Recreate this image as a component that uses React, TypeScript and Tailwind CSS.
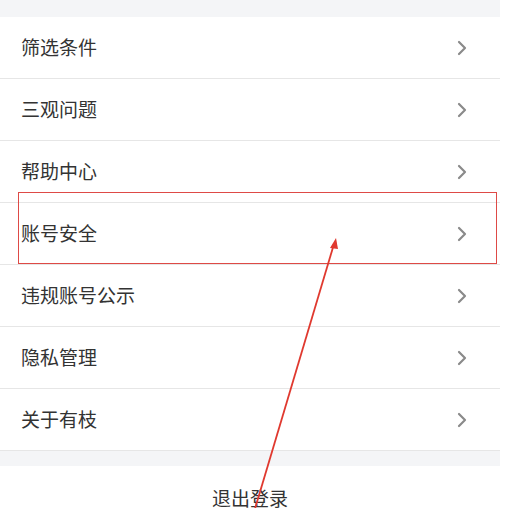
import React from "react";

const items = ["筛选条件", "三观问题", "帮助中心", "账号安全", "违规账号公示", "隐私管理", "关于有枝"];

function Chevron() {
  return (
    <svg width="12" height="16" viewBox="0 0 12 16" className="shrink-0">
      <polyline points="3,2 9,8 3,14" fill="none" stroke="#8a8a8a" strokeWidth="2.2" strokeLinecap="round" strokeLinejoin="round" />
    </svg>
  );
}

export default function App() {
  return (
    <div
      className="relative w-[506px] h-[508px] overflow-hidden bg-white"
      style={{ fontFamily: '"Noto Sans CJK SC", "Noto Sans", sans-serif' }}
    >
      <div className="w-[500px] flex flex-col">
        <div className="h-[17px] bg-[#f4f5f7]" />
        {items.map((t) => (
          <div key={t} className="h-[62px] flex items-center justify-between pl-[21px] pr-[32px] border-b border-[#e6e6e6] bg-white">
            <span className="text-[19px] text-[#333333] leading-none -mt-[2px]">{t}</span>
            <Chevron />
          </div>
        ))}
        <div className="h-[15px] bg-[#f4f5f7]" />
        <div className="h-[62px] flex items-center justify-center bg-white">
          <span className="text-[19px] text-[#333333] leading-none">退出登录</span>
        </div>
      </div>
      <div className="absolute left-[18px] top-[192px] w-[479px] h-[72px] border-[1.5px] border-[#de4a46]" />
      <svg className="absolute left-0 top-0" width="506" height="508" viewBox="0 0 506 508">
        <line x1="254" y1="512" x2="334" y2="244" stroke="#e0392f" strokeWidth="1.8" />
        <polygon points="336,238 330,248 338,249" fill="#e0392f" />
      </svg>
    </div>
  );
}
